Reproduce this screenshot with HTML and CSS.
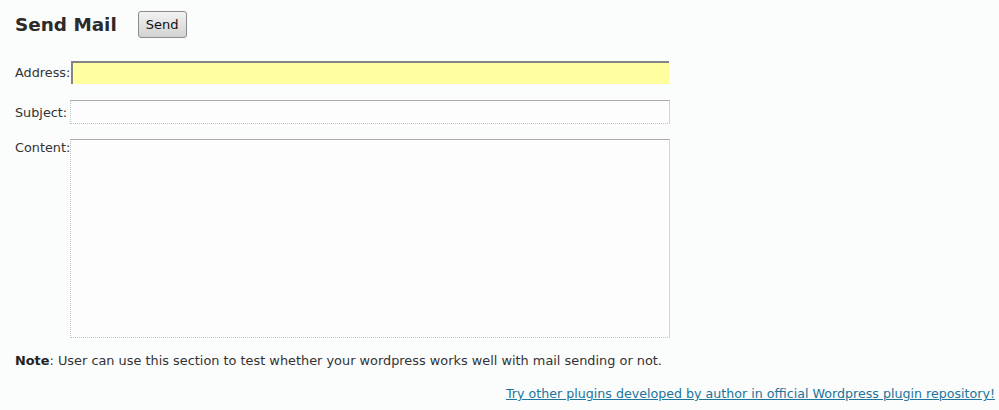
FILE: index.html
```html
<!DOCTYPE html>
<html>
<head>
<meta charset="utf-8">
<link rel="stylesheet" href="styles.css">
</head>
<body>
<div class="page">
  <div class="head">
    <h2 class="title">Send Mail</h2>
    <button class="send" type="button">Send</button>
  </div>
  <div class="row row-address">
    <label class="lbl">Address:</label>
    <input class="field field-address" type="text">
  </div>
  <div class="row row-subject">
    <label class="lbl">Subject:</label>
    <input class="field field-subject" type="text">
  </div>
  <div class="row row-content">
    <label class="lbl">Content:</label>
    <textarea class="field field-content"></textarea>
  </div>
  <p class="note"><b>Note</b>: User can use this section to test whether your wordpress works well with mail sending or not.</p>
  <div class="foot"><a class="link" href="#">Try other plugins developed by author in official Wordpress plugin repository!</a></div>
</div>
</body>
</html>
```
FILE: styles.css
```css
html, body {
  margin: 0;
  padding: 0;
  background: #fbfcfc;
}
body {
  font-family: "DejaVu Sans", Verdana, sans-serif;
  font-size: 13px;
  color: #333;
}
.page {
  padding: 11px 4px 0 15px;
  width: 980px;
}
.head {
  display: flex;
  align-items: center;
  gap: 21px;
  height: 27px;
}
.title {
  margin: 0;
  font-size: 18.4px;
  font-weight: bold;
  color: #2b2b2b;
  line-height: 22px;
}
.send {
  width: 49px;
  height: 27px;
  padding: 0;
  font-family: Tahoma, "DejaVu Sans", sans-serif;
  font-size: 13px;
  color: #111;
  border: 1px solid #8c8c8c;
  border-radius: 3px;
  background: linear-gradient(#f2f2f2, #d2d2d2);
}
.row {
  display: flex;
  align-items: center;
}
.lbl {
  width: 55px;
  line-height: 16px;
  font-size: 12.8px;
}
.field {
  box-sizing: border-box;
  margin: 0;
  padding: 0;
  background: #fdfdfd;
  font-family: inherit;
  font-size: 13px;
}
.row-address {
  margin-top: 23px;
}
.field-address {
  width: 598px;
  height: 23px;
  margin-left: 1px;
  background: #ffffa0;
  border: none;
  border-top: 2px solid #858585;
  border-left: 2px solid #858585;
  outline: none;
}
.row-subject {
  margin-top: 16px;
}
.row-subject .lbl {
  margin-top: 2px;
}
.field-subject,
.field-content {
  width: 600px;
  border-top: 1px solid #ababab;
  border-right: 1px solid #d4d4d4;
  border-bottom: 1px dotted #c4c4c4;
  border-left: 1px dotted #c4c4c4;
}
.field-subject {
  height: 24px;
}
.row-content {
  margin-top: 15px;
  align-items: flex-start;
}
.row-content .lbl {
  margin-top: 1px;
}
.field-content {
  height: 199px;
  resize: none;
}
.note {
  margin: 15px 0 0;
  line-height: 16px;
  font-size: 12.88px;
}
.note b {
  color: #222;
}
.foot {
  display: flex;
  justify-content: flex-end;
  margin-top: 17px;
}
.link {
  color: #21759b;
  text-decoration: underline;
  line-height: 16px;
  font-size: 12.65px;
}
```
